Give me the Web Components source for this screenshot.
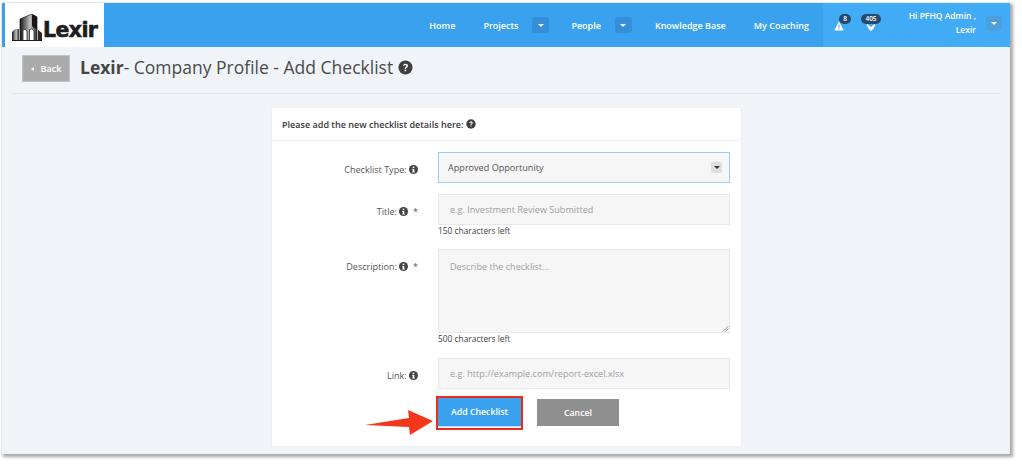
<!DOCTYPE html>
<html><head><meta charset="utf-8"><style>
html,body{margin:0;padding:0;background:#fff;}
body{width:1022px;height:466px;overflow:hidden;font-family:"Open Sans",sans-serif;}
</style></head><body>
<app-window>
<top-nav></top-nav>
<page-head></page-head>
<checklist-card></checklist-card>
</app-window>
<script>
const Q=(c)=>`<svg width="${c||15}" height="${c||15}" viewBox="0 0 16 16"><circle cx="8" cy="8" r="7.5" fill="#3f3f3f"/><path d="M5.4 6.2C5.5 4.7 6.6 4 8 4c1.5 0 2.7.8 2.7 2.2 0 1.1-.7 1.6-1.4 2.1-.5.3-.7.6-.7 1.2H7.100c0-1 .3-1.500 1-2 .5-.4.9-.7.9-1.200 0-.6-.5-.9-1-.9-.6 0-1 .3-1.100.8z" fill="#fff"/><rect x="7.100" y="10.300" width="1.600" height="1.700" fill="#fff"/></svg>`;
const I=()=>`<svg width="9" height="9" viewBox="0 0 16 16" style="vertical-align:-1px"><circle cx="8" cy="8" r="8" fill="#444"/><rect x="6.500" y="3" width="3" height="2.500" fill="#fff"/><path d="M5.500 7h4v5h1v1.500h-5V12h1V8.500h-1z" fill="#fff"/></svg>`;
const def=(n,css,html)=>customElements.define(n,class extends HTMLElement{constructor(){super();this.attachShadow({mode:'open'}).innerHTML=`<style>${css}</style>${typeof html==='function'?html(this):html}`;}});

def('app-window',`:host{display:block;position:relative;box-sizing:border-box;width:1008px;height:451px;margin:3px 0 0 2px;background:#f0f4f8;box-shadow:2px 2px 3px 1px #a8a8a8,0 0 1px #bbb;}`,`<slot></slot>`);

def('drop-btn',`:host{display:inline-flex;align-items:center;justify-content:center;width:17px;height:16px;border-radius:3px;background:var(--b,#348fd8);}
i{width:0;height:0;border:3px solid transparent;border-top:3px solid #fff;border-bottom:0;}`,`<i></i>`);

def('nav-link',`:host{display:flex;align-items:center;height:44px;color:#fff;font-size:9px;font-weight:600;white-space:nowrap;}`,`<slot></slot>`);

def('nav-badge',`:host{position:absolute;box-sizing:border-box;height:10px;border-radius:5px;background:#24496a;color:#fff;font-size:6.500px;font-weight:600;line-height:10px;text-align:center;}`,`<slot></slot>`);

def('top-nav',`:host{display:flex;height:44px;background:#3aa1ee;padding-left:3px;}
.logo{display:flex;align-items:center;box-sizing:border-box;width:99px;height:44px;background:#fff;padding:4px 0 0 7px;}
.logo svg{flex:none;margin-left:0}
.logo b{font-family:"DejaVu Sans",sans-serif;font-weight:800;font-size:20.500px;color:#1d1d1d;letter-spacing:-.6px;margin:5px 0 0 1px;-webkit-text-stroke:.6px #1d1d1d;}
.links{display:flex;flex:1;align-items:center;justify-content:flex-end;}
.alerts{display:flex;align-items:center;width:187px;height:44px;background:#42abf6;position:relative;margin-left:14px;box-sizing:border-box;}
.ic{position:relative;width:10px;height:10px;display:block;}
.user{color:#fff;font-size:8.500px;font-weight:600;line-height:14px;text-align:right;position:absolute;right:34px;top:6px;white-space:nowrap;}
.alerts drop-btn{position:absolute;right:8px;top:13px;--b:#4d9fdc;height:15px;width:16px;}
`,`<div class="logo">
<svg width="30" height="27" viewBox="0 0 30 27"><defs><linearGradient id="g" x1="0" y1="0" x2="1" y2="0"><stop offset="0" stop-color="#151515"/><stop offset=".6" stop-color="#c4c4c4"/><stop offset="1" stop-color="#2a2a2a"/></linearGradient></defs>
<path d="M0 18L3 15 7 15V27H0z" fill="url(#g)"/><path d="M8 27V5L20 0 25 3V27H22V17Q20 13.500 17.500 15.500V27H15V17Q13 14 11 16V27z" fill="url(#g)" stroke="#151515" stroke-width=".7"/><path d="M20 .5L25 3V15L22 14 20 12z" fill="#151515"/><path d="M26 16L30 19V27H26z" fill="#2a2a2a"/><path d="M0 26h30v1H0z" fill="#1d1d1d"/></svg>
<b>Lexir</b></div>
<div class="links">
<nav-link style="margin-right:28px">Home</nav-link>
<nav-link style="margin-right:14px">Projects</nav-link><drop-btn style="margin-right:22px"></drop-btn>
<nav-link style="margin-right:14px">People</nav-link><drop-btn style="margin-right:23px"></drop-btn>
<nav-link style="margin-right:28px">Knowledge Base</nav-link>
<nav-link>My Coaching</nav-link>
<div class="alerts">
<span class="ic" style="left:11px;margin-top:2px"><svg width="10" height="10" viewBox="0 0 10 10" style="display:block"><path d="M5 .5L9.800 9.500H.2z" fill="#fff"/><rect x="4.500" y="3.500" width="1" height="3.300" fill="#42abf6"/><rect x="4.500" y="7.400" width="1" height="1.100" fill="#42abf6"/></svg><nav-badge style="left:5px;top:-7px;width:12px">8</nav-badge></span>
<span class="ic" style="left:33px;margin-top:4px"><svg width="10" height="10" viewBox="0 0 10 10" style="display:block"><path d="M.8 1.500C.8 5 3 7.500 5 9c2-1.500 4.200-4 4.200-7.500L7 3.500 5 5 3 3.500z" fill="#fff"/></svg><nav-badge style="left:-5px;top:-8px;width:20px">405</nav-badge></span>
<div class="user">Hi PFHQ Admin ,<br>Lexir</div>
<drop-btn></drop-btn>
</div></div>`);

def('page-head',`:host{display:flex;align-items:flex-start;box-sizing:border-box;height:47px;margin:0 10px;padding:8px 0 0 10px;border-bottom:1px solid #e0e6ea;}
.back{display:flex;align-items:center;justify-content:center;gap:7px;box-sizing:border-box;width:48px;height:27px;background:#ababab;border:1px solid #c2c2c2;color:#fff;font-size:9px;font-weight:600;}
.back i{width:0;height:0;border:2.500px solid transparent;border-right:3px solid #fff;border-left:0;}
h1{margin:0 0 0 10px;font-size:17.500px;line-height:24px;font-weight:400;color:#4a4a4a;display:flex;align-items:center;gap:5px;white-space:pre;}
h1 b{font-weight:700;color:#454545}
h1 span{white-space:pre}
svg{display:block}`,`<div class="back"><i></i>Back</div><h1><span><b>Lexir</b>- Company Profile - Add Checklist</span>${Q(15)}</h1>`);

def('form-row',`:host{display:grid;grid-template-columns:160px 292px;column-gap:6px;margin-bottom:var(--mb,11px);}
.l{text-align:right;font-size:9.050px;color:#555;padding:var(--lt,11px) 14px 0 0;line-height:14px;white-space:pre;}`,
e=>`<div class="l"><slot name="label"></slot></div><div><slot></slot></div>`);

def('text-box',`:host{display:block;box-sizing:border-box;width:292px;height:var(--h,31px);background:#f6f6f6;border:1px solid #e8e8e8;padding:var(--pt,0) 11px 0;color:#a0a0a0;font-size:9.100px;line-height:29px;position:relative;}
svg{position:absolute;right:0;bottom:0}`,e=>`<slot></slot>${e.hasAttribute('grip')?'<svg width="7" height="7" viewBox="0 0 7 7"><path d="M1 6.500L6.500 1M3.500 6.500L6.500 3.500" stroke="#777" stroke-width=".7"/></svg>':''}`);

def('select-box',`:host{display:flex;align-items:center;justify-content:space-between;box-sizing:border-box;width:292px;height:31px;background:#f6f6f6;border:1px solid #9ccdf2;padding:0 7px 0 9px;color:#555;font-size:9.100px;}
.a{display:flex;align-items:center;justify-content:center;width:11px;height:11px;background:#dedede;border-radius:2px;}
.a i{width:0;height:0;border:3px solid transparent;border-top:3px solid #333;border-bottom:0;}`,`<slot></slot><span class="a"><i></i></span>`);

def('checklist-card',`:host{display:block;box-sizing:border-box;width:471px;height:339px;margin:14px 0 0 269px;background:#fff;border:1px solid #edf0f3;border-top:0;position:relative;font-family:"Open Sans",sans-serif;}
.t{display:flex;align-items:center;gap:3px;height:33px;padding:0 0 0 10px;box-sizing:border-box;border-bottom:1px solid #eef0f2;font-size:9.050px;font-weight:600;color:#3a3a3a;white-space:pre;}
.b{padding-top:11px}
.c{font-size:8.400px;color:#444;line-height:12px;margin-top:0;}
.btns{display:flex;gap:16px;margin:-1px 0 0 166px;align-items:flex-start;}
.add,.can{display:flex;align-items:center;justify-content:center;box-sizing:border-box;height:27px;color:#fff;font-size:8.750px;font-weight:600;}
.add{width:83px;height:30px;padding-bottom:2px;background:linear-gradient(#3aa1ee 0 28px,#bfe0f8 28px,#bfe0f8 29px,#fff 29px);margin-top:-1px;}
.can{width:82px;background:#8f8f8f;}
.hl{position:absolute;left:164px;top:288px;width:87px;height:34px;box-sizing:border-box;border:2px solid #ee2b1a;}
.ar{position:absolute;left:92px;top:299px;}
svg{display:inline-block}
`,`<div class="t">Please add the new checklist details here:${Q(10)}</div>
<div class="b">
<form-row style="--mb:11px"><span slot="label">Checklist Type: ${I()}</span><select-box>Approved Opportunity</select-box></form-row>
<form-row style="--mb:12px"><span slot="label">Title: ${I()}  *</span><text-box>e.g. Investment Review Submitted</text-box><div class="c">150 characters left</div></form-row>
<form-row style="--mb:13px"><span slot="label">Description: ${I()}  *</span><text-box grip style="--h:84px;--pt:2px">Describe the checklist...</text-box><div class="c">500 characters left</div></form-row>
<form-row style="--mb:11px"><span slot="label">Link: ${I()}</span><text-box>e.g. http://example.com/report-excel.xlsx</text-box></form-row>
<div class="btns"><div class="add">Add Checklist</div><div class="can">Cancel</div></div>
</div>
<div class="hl"></div>
<svg class="ar" width="72" height="38" viewBox="0 0 72 38"><path d="M1 18L45 11 44 3 69 14 46 28 45 20z" fill="#f4361c"/></svg>`);
</script>
</body></html>
